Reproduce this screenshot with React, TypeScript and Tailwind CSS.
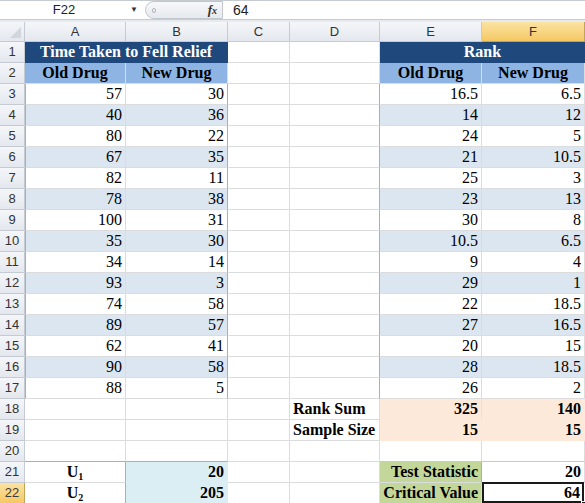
import React from 'react';

const cols = [101, 102, 62, 90, 102, 103];
const letters = ['A', 'B', 'C', 'D', 'E', 'F'];

const oldDrug = [57, 40, 80, 67, 82, 78, 100, 35, 34, 93, 74, 89, 62, 90, 88];
const newDrug = [30, 36, 22, 35, 11, 38, 31, 30, 14, 3, 58, 57, 41, 58, 5];
const rankOld = ['16.5', '14', '24', '21', '25', '23', '30', '10.5', '9', '29', '22', '27', '20', '28', '26'];
const rankNew = ['6.5', '12', '5', '10.5', '3', '13', '8', '6.5', '4', '1', '18.5', '16.5', '15', '18.5', '2'];

type CellProps = {
    w: number;
    children?: React.ReactNode;
    className?: string;
};

// one spreadsheet cell, gridline on right and bottom
function Cell({ w, children, className = '' }: CellProps) {
    return (
        <div
            style={{ width: w }}
            className={`h-full shrink-0 flex items-center px-[3px] border-r border-b border-[#dadcdd] text-[16px] leading-none text-black overflow-hidden whitespace-nowrap ${className}`}
        >
            {children}
        </div>
    );
}

function RowHead({ n, active = false }: { n: number; active?: boolean }) {
    return (
        <div
            className={`w-[25px] h-full shrink-0 flex items-center justify-center border-r border-b text-[13px] font-['Liberation_Sans',sans-serif] ${
                active
                    ? 'bg-gradient-to-b from-[#fbe3a2] to-[#f5c862] border-[#c2a35a] text-[#3b3b3b]'
                    : 'bg-gradient-to-b from-[#f4f6f9] to-[#e4e8ee] border-[#c5cbd3] text-[#333]'
            }`}
        >
            {n}
        </div>
    );
}

function Row({ n, children, active }: { n: number; children: React.ReactNode; active?: boolean }) {
    return (
        <div className="flex h-[21px]">
            <RowHead n={n} active={active} />
            {children}
        </div>
    );
}

function U({ i }: { i: number }) {
    return (
        <span className="relative leading-none">
            U<span className="relative top-[3px] text-[10px]">{i}</span>
        </span>
    );
}

export default function App() {
    return (
        <div className="w-[585px] h-[503px] overflow-hidden bg-white font-['Liberation_Serif',serif]">
            {/* 编辑栏 */}
            <div className="h-[20px] flex items-center border-t border-b border-[#c6cbd2] bg-white font-['Liberation_Sans',sans-serif] text-[13px] text-[#222]">
                <div className="w-[126px] flex items-center justify-center pl-[2px]">F22</div>
                <div className="w-[16px] flex items-center justify-center text-[8px] text-[#333]">▼</div>
                <div className="w-[78px] h-[18px] ml-[3px] flex items-center justify-between rounded-l-full border border-[#c2c7ce] bg-gradient-to-b from-[#f7f8fa] to-[#e6e9ee] pl-[6px] pr-[5px]">
                    <span className="w-[4px] h-[5px] rounded-full border border-[#b0b5bd]" />
                    <span className="font-['Liberation_Serif',serif] italic font-bold text-[13px] text-[#333]">
                        f<span className="text-[10px]">x</span>
                    </span>
                </div>
                <div className="pl-[10px] text-[14px]">64</div>
            </div>
            <div className="h-[2px] bg-[#e7eaee]" />

            {/* 列标题 */}
            <div className="flex h-[20px] font-['Liberation_Sans',sans-serif] text-[13px] text-[#333]">
                <div className="relative w-[25px] shrink-0 border-r border-b border-[#c5cbd3] bg-gradient-to-b from-[#f4f6f9] to-[#e4e8ee]">
                    <div className="absolute right-[3px] bottom-[3px] w-0 h-0 border-l-[11px] border-l-transparent border-b-[11px] border-b-[#d2d6dc]" />
                </div>
                {cols.map((w, i) => (
                    <div
                        key={letters[i]}
                        style={{ width: w }}
                        className={`shrink-0 flex items-center justify-center border-r border-b ${
                            letters[i] === 'F'
                                ? 'bg-gradient-to-b from-[#fbe3a2] to-[#f5c862] border-[#c2a35a]'
                                : 'bg-gradient-to-b from-[#f4f6f9] to-[#e4e8ee] border-[#c5cbd3]'
                        }`}
                    >
                        {letters[i]}
                    </div>
                ))}
            </div>

            {/* 第1行 */}
            <Row n={1}>
                <div
                    style={{ width: cols[0] + cols[1] }}
                    className="h-full shrink-0 flex items-center justify-center bg-[#1f497d] text-white font-bold text-[16px] border-b border-r border-[#1f497d]"
                >
                    Time Taken to Fell Relief
                </div>
                <Cell w={cols[2]} />
                <Cell w={cols[3]} />
                <div
                    style={{ width: cols[4] + cols[5] }}
                    className="h-full shrink-0 flex items-center justify-center bg-[#1f497d] text-white font-bold text-[16px] border-b border-[#1f497d]"
                >
                    Rank
                </div>
            </Row>

            {/* 第2行 */}
            <Row n={2}>
                <Cell w={cols[0]} className="justify-center font-bold bg-[#8db4e2] border-[#8db4e2]">Old Drug</Cell>
                <Cell w={cols[1]} className="justify-center font-bold bg-[#8db4e2] border-[#8db4e2]">New Drug</Cell>
                <Cell w={cols[2]} />
                <Cell w={cols[3]} />
                <Cell w={cols[4]} className="justify-center font-bold bg-[#8db4e2] border-[#8db4e2]">Old Drug</Cell>
                <Cell w={cols[5]} className="justify-center font-bold bg-[#8db4e2] border-[#8db4e2]">New Drug</Cell>
            </Row>

            {/* 数据行 */}
            {oldDrug.map((v, i) => {
                const stripe = i % 2 === 1 ? 'bg-[#dce6f1]' : 'bg-white';
                const tb = `justify-end ${stripe} border-[#b8cce4]`;
                return (
                    <Row key={i} n={i + 3}>
                        <Cell w={cols[0]} className={`${tb} border-l border-l-[#95b3d7]`}>{v}</Cell>
                        <Cell w={cols[1]} className={`${tb} border-r-[#95b3d7]`}>{newDrug[i]}</Cell>
                        <Cell w={cols[2]} />
                        <Cell w={cols[3]} className="border-r-[#95b3d7]" />
                        <Cell w={cols[4]} className={tb}>{rankOld[i]}</Cell>
                        <Cell w={cols[5]} className={tb}>{rankNew[i]}</Cell>
                    </Row>
                );
            })}

            {/* 秩和 / 样本量 */}
            <Row n={18}>
                <Cell w={cols[0]} />
                <Cell w={cols[1]} />
                <Cell w={cols[2]} />
                <Cell w={cols[3]} className="font-bold">Rank Sum</Cell>
                <Cell w={cols[4]} className="justify-end font-bold bg-[#fde9d9] border-[#fde9d9] border-r-[#f2dcdb]">325</Cell>
                <Cell w={cols[5]} className="justify-end font-bold bg-[#fde9d9] border-[#fde9d9]">140</Cell>
            </Row>
            <Row n={19}>
                <Cell w={cols[0]} />
                <Cell w={cols[1]} />
                <Cell w={cols[2]} />
                <Cell w={cols[3]} className="font-bold">Sample Size</Cell>
                <Cell w={cols[4]} className="justify-end font-bold bg-[#fde9d9] border-[#fde9d9]">15</Cell>
                <Cell w={cols[5]} className="justify-end font-bold bg-[#fde9d9] border-[#fde9d9]">15</Cell>
            </Row>
            <Row n={20}>
                {cols.map((w, i) => (
                    <Cell key={i} w={w} className={i < 2 ? 'border-b-[#95b3d7]' : i >= 4 ? 'border-b-[#b8cce4]' : ''} />
                ))}
            </Row>

            {/* U 统计量 */}
            <Row n={21}>
                <Cell w={cols[0]} className="justify-center font-bold border-r-[#95b3d7] border-b-[#dadcdd]">
                    <U i={1} />
                </Cell>
                <Cell w={cols[1]} className="justify-end font-bold bg-[#daeef3] border-[#daeef3]">20</Cell>
                <Cell w={cols[2]} />
                <Cell w={cols[3]} />
                <Cell w={cols[4]} className="justify-end font-bold bg-[#c4d79b] border-[#c4d79b] border-r-[#95b3d7]">Test Statistic</Cell>
                <Cell w={cols[5]} className="justify-end font-bold border-b-[#b8cce4]">20</Cell>
            </Row>
            <Row n={22} active>
                <Cell w={cols[0]} className="justify-center font-bold border-r-[#95b3d7]">
                    <U i={2} />
                </Cell>
                <Cell w={cols[1]} className="justify-end font-bold bg-[#daeef3] border-[#daeef3]">205</Cell>
                <Cell w={cols[2]} />
                <Cell w={cols[3]} />
                <Cell w={cols[4]} className="justify-end font-bold bg-[#c4d79b] border-[#c4d79b]">Critical Value</Cell>
                <div style={{ width: cols[5] }} className="relative h-full shrink-0">
                    <div className="absolute left-0 top-[-1px] right-[1px] bottom-[1px] border-2 border-[#1a1a1a] flex items-center justify-end pr-[2px] font-bold text-[16px] leading-none">
                        64
                    </div>
                    <div className="absolute right-[-1px] bottom-[-2px] w-[5px] h-[5px] bg-[#1a1a1a] border border-white" />
                </div>
            </Row>
        </div>
    );
}
